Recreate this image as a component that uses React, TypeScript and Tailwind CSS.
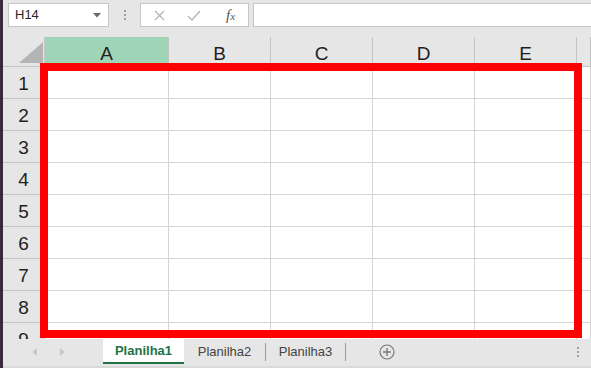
import React from "react";

const columns = ["A", "B", "C", "D", "E", ""];
const rows = [1, 2, 3, 4, 5, 6, 7, 8, 9];

const App = () => {
  return (
    <div
      className="w-[591px] h-[368px] overflow-hidden flex flex-col bg-[#e6e6e6] border-l-[3px] border-[#3a2a3c]"
      style={{ fontFamily: '"Liberation Sans", Arial, sans-serif' }}
    >
      {/* formula bar */}
      <div className="h-[37px] flex items-start pt-[3px] shrink-0">
        <div className="ml-[5px] w-[101px] h-[24px] bg-white border border-[#c6c6c6] flex items-center pl-[6px] pr-[7px]">
          <span className="text-[13px] text-[#262626]">H14</span>
          <svg className="ml-auto" width="8" height="5" viewBox="0 0 8 5">
            <path d="M0 0h8L4 4.5z" fill="#6a6a6a" />
          </svg>
        </div>
        <div className="w-[31px] h-[24px] flex flex-col items-center justify-center gap-[2px]">
          <span className="w-[2px] h-[2px] bg-[#a0a0a0]" />
          <span className="w-[2px] h-[2px] bg-[#a0a0a0]" />
          <span className="w-[2px] h-[2px] bg-[#a0a0a0]" />
        </div>
        <div className="w-[109px] h-[24px] bg-white border border-[#c6c6c6] flex items-center">
          <svg className="ml-[13px]" width="11" height="11" viewBox="0 0 11 11">
            <path d="M1 1l9 9M10 1l-9 9" stroke="#b5b5b5" strokeWidth="1.3" />
          </svg>
          <svg className="ml-[22px]" width="14" height="11" viewBox="0 0 14 11">
            <path d="M1 6l4 4 8-9" stroke="#b5b5b5" strokeWidth="1.4" fill="none" />
          </svg>
          <span
            className="ml-[25px] text-[15px] italic text-[#555]"
            style={{ fontFamily: '"Liberation Serif", serif' }}
          >
            f<span className="text-[11px]">x</span>
          </span>
        </div>
        <div className="ml-[4px] flex-1 h-[24px] bg-white border border-[#c6c6c6] border-r-0" />
      </div>

      {/* grid */}
      <div className="relative h-[302px] overflow-hidden shrink-0">
        <div className="grid grid-cols-[42px_124px_102px_102px_102px_102px_1fr] grid-rows-[30px_repeat(9,32px)]">
          <div className="bg-[#e6e6e6] border-r border-b border-[#c4c4c4] flex items-end justify-end">
            <svg width="24" height="21" viewBox="0 0 24 21" className="mb-[3px] mr-[1px]">
              <path d="M24 0V21H0z" fill="#b4b4b4" />
            </svg>
          </div>
          {columns.map((c) => (
            <div
              key={c || "F"}
              className={
                c === "A"
                  ? "bg-[#9fd5b7] border-r border-b border-[#c4c4c4] flex items-center justify-center pt-[6px] text-[19px] text-[#1f1f1f]"
                  : "bg-[#e6e6e6] border-r border-b border-[#c4c4c4] flex items-center justify-center pt-[6px] text-[19px] text-[#1f1f1f]"
              }
            >
              {c}
            </div>
          ))}
          {rows.map((r) => (
            <React.Fragment key={r}>
              <div className="bg-[#e6e6e6] border-r border-b border-[#c4c4c4] flex items-center justify-center pt-[4px] text-[19px] text-[#1f1f1f]">
                {r}
              </div>
              {columns.map((c) => (
                <div
                  key={c || "F"}
                  className="bg-white border-r border-b border-[#d4d4d4]"
                />
              ))}
            </React.Fragment>
          ))}
        </div>
        <div className="absolute left-[37px] top-[26px] w-[542px] h-[275px] border-[8px] border-[#ff0000]" />
      </div>

      {/* sheet tabs */}
      <div className="flex-1 flex items-start bg-[#e6e6e6] border-b-2 border-[#d9d9d9]">
        <div className="h-[25px] flex items-center">
          <svg className="ml-[29px]" width="5" height="8" viewBox="0 0 5 8">
            <path d="M5 0v8L0 4z" fill="#c8c8c8" />
          </svg>
          <svg className="ml-[23px]" width="5" height="8" viewBox="0 0 5 8">
            <path d="M0 0v8l5-4z" fill="#c8c8c8" />
          </svg>
        </div>
        <div className="ml-[38px] w-[81px] h-[25px] bg-white border-b-2 border-[#217346] flex items-center justify-center text-[13px] font-bold text-[#217346]">
          Planilha1
        </div>
        <div className="w-[81px] h-[25px] flex items-center justify-center text-[13px] text-[#444]">
          Planilha2
        </div>
        <div className="w-px h-[18px] mt-[4px] bg-[#9a9a9a]" />
        <div className="w-[79px] h-[25px] flex items-center justify-center text-[13px] text-[#444]">
          Planilha3
        </div>
        <div className="w-px h-[18px] mt-[4px] bg-[#9a9a9a]" />
        <div className="ml-[33px] h-[25px] flex items-center">
          <svg width="16" height="16" viewBox="0 0 16 16">
            <circle cx="8" cy="8" r="7" fill="none" stroke="#7a7a7a" strokeWidth="1.2" />
            <path d="M8 4v8M4 8h8" stroke="#7a7a7a" strokeWidth="1.4" />
          </svg>
        </div>
        <div className="ml-auto mr-[12px] h-[25px] flex flex-col items-center justify-center gap-[2px]">
          <span className="w-[2px] h-[2px] bg-[#a0a0a0]" />
          <span className="w-[2px] h-[2px] bg-[#a0a0a0]" />
          <span className="w-[2px] h-[2px] bg-[#a0a0a0]" />
        </div>
      </div>
    </div>
  );
};

export default App;
